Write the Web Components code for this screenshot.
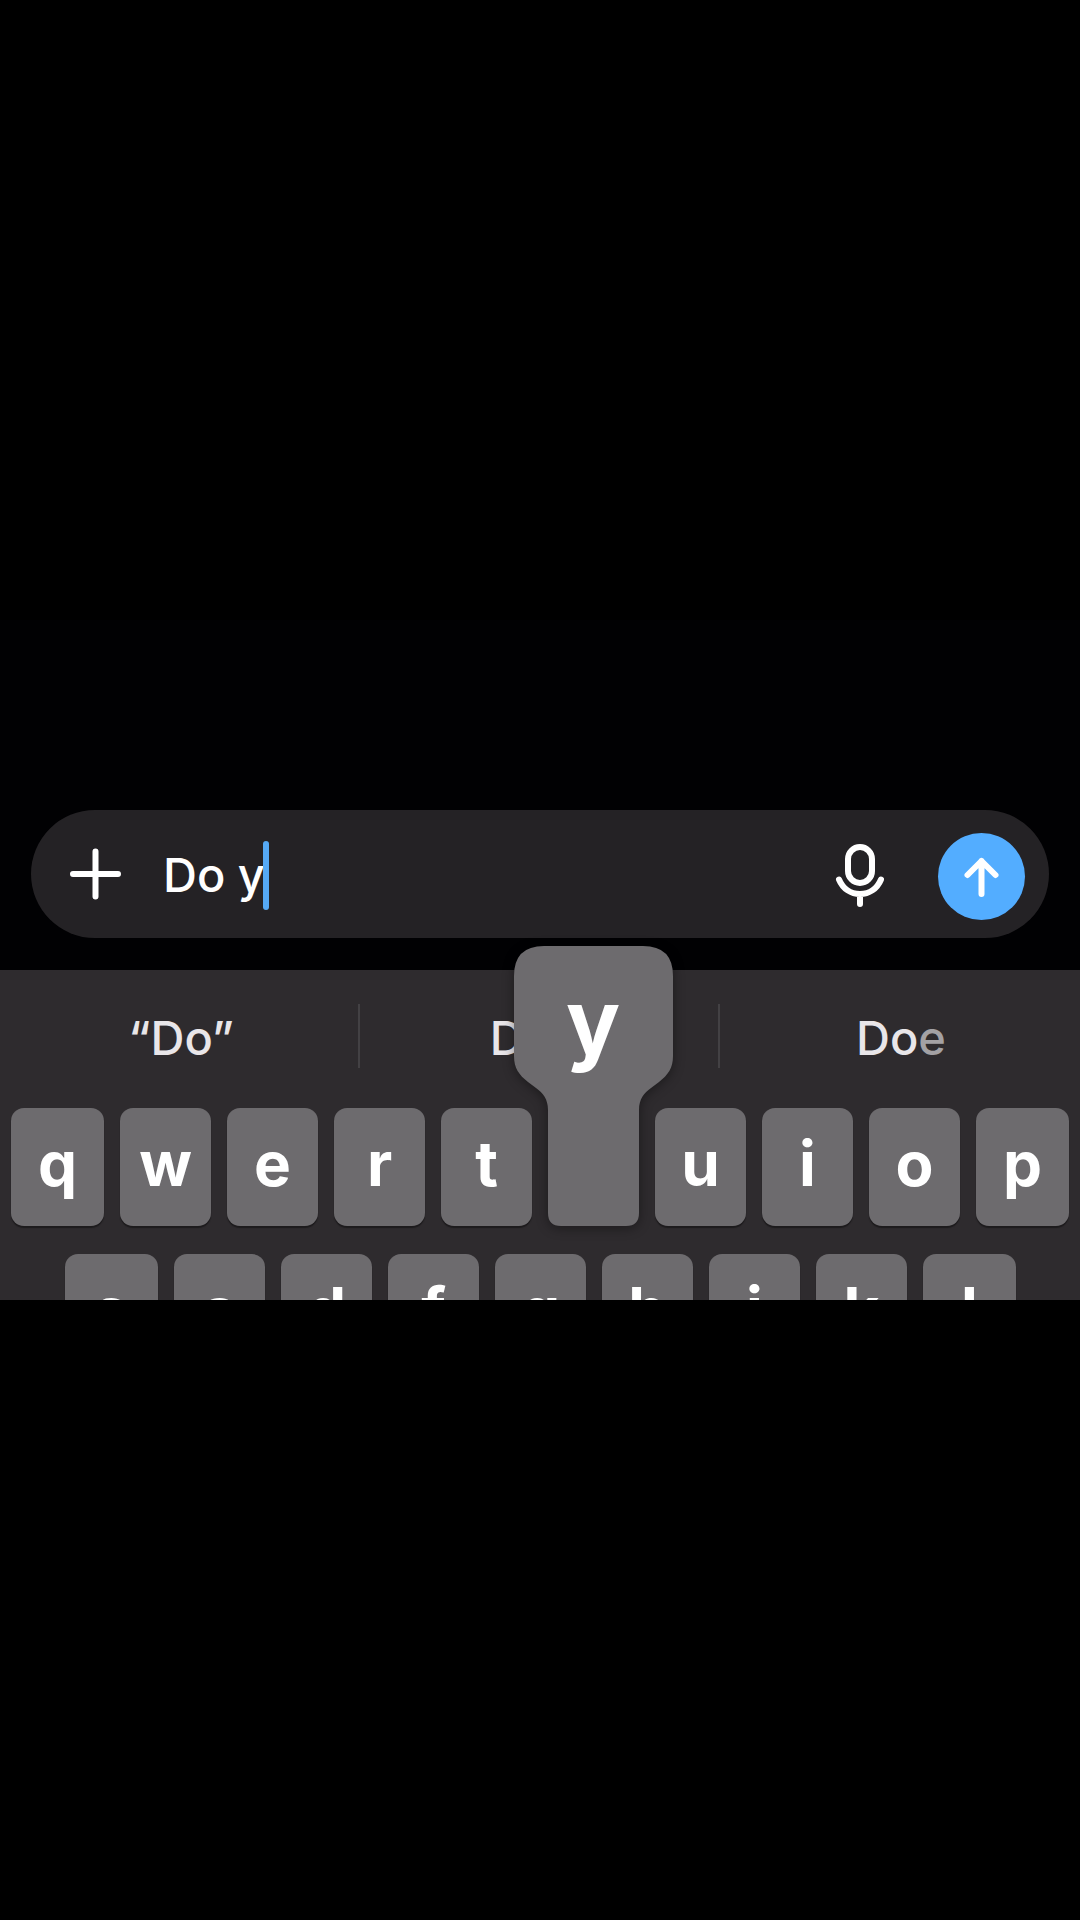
<!DOCTYPE html>
<html lang="en">
<head>
<meta charset="utf-8">
<meta name="viewport" content="width=device-width, initial-scale=1">
<title>Message composer</title>
<style>
  body { margin: 0; background: #000; font-family: Inter, "Liberation Sans", sans-serif; }
</style>
</head>
<body>
<phone-screen>
  <message-composer slot="composer" value="Do y"></message-composer>
  <soft-keyboard slot="keyboard">
    <suggestion-item slot="suggestions">“Do”</suggestion-item>
    <suggestion-item slot="suggestions">Do it</suggestion-item>
    <suggestion-item slot="suggestions">Do<span slot="rest">e</span></suggestion-item>
    <key-row slot="rows">
      <key-cap>q</key-cap><key-cap>w</key-cap><key-cap>e</key-cap><key-cap>r</key-cap><key-cap>t</key-cap><key-cap pressed>y</key-cap><key-cap>u</key-cap><key-cap>i</key-cap><key-cap>o</key-cap><key-cap>p</key-cap>
    </key-row>
    <key-row slot="rows" inset>
      <key-cap>a</key-cap><key-cap>s</key-cap><key-cap>d</key-cap><key-cap>f</key-cap><key-cap>g</key-cap><key-cap>h</key-cap><key-cap>j</key-cap><key-cap>k</key-cap><key-cap>l</key-cap>
    </key-row>
  </soft-keyboard>
</phone-screen>

<script>
const define = (name, html, setup) => {
  const template = document.createElement('template');
  template.innerHTML = html;
  customElements.define(name, class extends HTMLElement {
    constructor() {
      super();
      this.attachShadow({ mode: 'open' }).append(template.content.cloneNode(true));
    }
    connectedCallback() { if (setup) setup(this, this.shadowRoot); }
  });
};

define('phone-screen', `
  <style>
    :host { display: flex; align-items: center; min-height: 100vh; }
    main { width: 100%; aspect-ratio: 27 / 17; overflow: hidden; background: #010103; display: flex; flex-direction: column; }
    .chat { flex: none; height: 190px; }
    slot[name=composer] { display: block; padding: 0 31px 32px; }
  </style>
  <main>
    <div class="chat"></div>
    <slot name="composer"></slot>
    <slot name="keyboard"></slot>
  </main>`);

define('message-composer', `
  <style>
    :host { display: block; }
    form { display: flex; align-items: center; height: 128px; box-sizing: border-box; padding: 0 24px 0 32px; border-radius: 64px; background: #242225; }
    button { flex: none; padding: 0; border: 0; background: none; display: block; }
    svg { display: block; fill: none; stroke: #fff; stroke-width: 6; stroke-linecap: round; stroke-linejoin: round; }
    .field { flex: 1; display: flex; align-items: center; padding: 2px 0 0 36px; }
    input { field-sizing: content; font: 500 47px/60px Inter, "Liberation Sans", sans-serif; color: #fff; background: none; border: 0; padding: 0; outline: 0; caret-color: transparent; }
    .caret { width: 6px; height: 69px; margin-left: -2px; border-radius: 3px; background: #55a9f5; }
    .mic { margin-right: 48px; }
    .send { width: 87px; height: 87px; border-radius: 50%; background: #53adff; margin-top: 5px; }
  </style>
  <form>
    <button type="button" aria-label="Add attachment">
      <svg width="64" height="64" viewBox="0 0 64 64"><path d="M10 32H55M32.500 9.500V54.500"/></svg>
    </button>
    <div class="field"><input type="text" aria-label="Message"><span class="caret"></span></div>
    <button class="mic" type="button" aria-label="Dictate">
      <svg width="60" height="68" viewBox="0 0 60 68"><rect x="18" y="7" width="24" height="36" rx="12"/><path d="M9 39.500C13 49 21 54 30 54S47 49 51 39.500M30 54V64"/></svg>
    </button>
    <button class="send" type="button" aria-label="Send">
      <svg width="87" height="87" viewBox="0 0 87 87"><path d="M43.500 61V28M29.500 42L43.500 28L57.500 42"/></svg>
    </button>
  </form>`, (host, root) => { root.querySelector('input').value = host.getAttribute('value'); });

define('soft-keyboard', `
  <style>
    :host { display: block; flex: 1 0 auto; background: #2e2b2e; }
    .suggestions { display: grid; grid-template-columns: repeat(3, 1fr); padding: 34px 0 40px; height: 64px; }
    .rows { display: flex; flex-direction: column; gap: 28px; }
  </style>
  <div class="suggestions"><slot name="suggestions"></slot></div>
  <div class="rows"><slot name="rows"></slot></div>`);

define('suggestion-item', `
  <style>
    :host { display: block; height: 64px; border-right: 2px solid #434144; }
    :host(:last-of-type) { border-color: transparent; }
    button { width: 100%; height: 64px; padding: 3px 0 0 4px; border: 0; background: none; color: #e9e6e9; font: 500 47px/60px Inter, "Liberation Sans", sans-serif; }
    .rest { color: #a3a1a4; }
  </style>
  <button type="button"><slot></slot><span class="rest"><slot name="rest"></slot></span></button>`);

define('key-row', `
  <style>
    :host { display: flex; gap: 16px; padding: 0 11px; }
    :host([inset]) { padding: 0 64px 0 65px; }
  </style>
  <slot></slot>`);

define('key-cap', `
  <style>
    :host { display: block; flex: 1 1 0; min-width: 0; position: relative; }
    :host(:first-of-type), :host(:last-of-type) { flex: 0 0 93px; }
    button { display: block; width: 100%; height: 118px; padding: 0 0 4px; border: 0; border-radius: 13px; background: #6d6b6e; box-shadow: 0 2px 1px #1d1b1d; color: #fff; font: 700 62px/112px Inter, "Liberation Sans", sans-serif; }
    .callout { display: none; }
    :host([pressed]) { z-index: 1; }
    :host([pressed]) button { position: absolute; bottom: 0; left: 50%; width: 159px; height: 280px; margin-left: -80px; padding: 0; background: none; box-shadow: none; font-size: 90px; line-height: 152px; }
    :host([pressed]) .callout { display: block; position: absolute; inset: 0; filter: drop-shadow(0 2px 6px #0006); fill: #6d6b6e; }
    .label { display: block; position: relative; height: 100%; }
  </style>
  <button type="button">
    <svg class="callout" width="159" height="280" viewBox="0 0 159 280"><path d="M30 0H129Q159 0 159 30V110C159 122 154 129 145 136L137 142C130 147 125 153 125 164V267Q125 280 112 280H47Q34 280 34 267V164C34 153 29 147 22 142L14 136C5 129 0 122 0 110V30Q0 0 30 0Z"/></svg>
    <span class="label"><slot></slot></span>
  </button>`);
</script>
</body>
</html>
